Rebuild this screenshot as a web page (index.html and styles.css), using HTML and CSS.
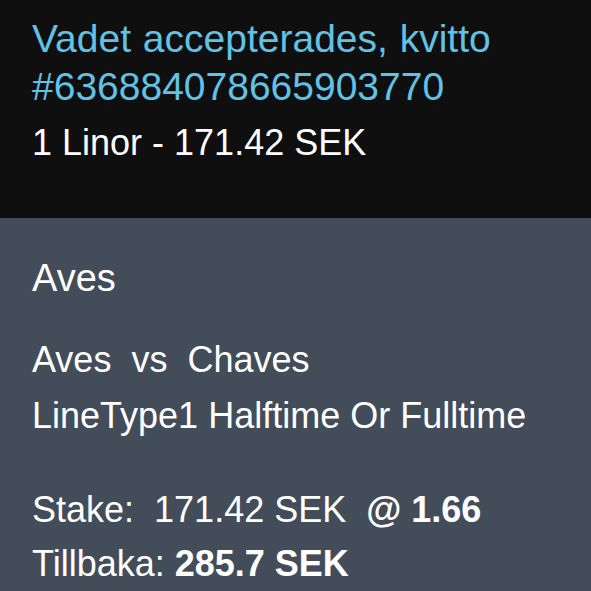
FILE: index.html
```html
<!DOCTYPE html>
<html lang="sv">
<head>
    <meta charset="UTF-8">
    <meta name="viewport" content="width=device-width, initial-scale=1.0">
    <title>Kvitto</title>
    <link rel="stylesheet" href="styles.css">
</head>
<body>
    <header class="receipt-head">
        <h1 class="receipt-title">Vadet accepterades, kvitto #636884078665903770</h1>
        <p class="receipt-sum">1 Linor - 171.42 SEK</p>
    </header>

    <section class="bet">
        <h2 class="bet-event">Aves</h2>

        <div class="bet-info">
            <p>Aves &nbsp;vs &nbsp;Chaves</p>
            <p>LineType1 Halftime Or Fulltime</p>
        </div>

        <div class="bet-amount">
            <p>Stake: &nbsp;171.42 SEK &nbsp;<b>@ 1.66</b></p>
            <p>Tillbaka: <b>285.7 SEK</b></p>
        </div>
    </section>
</body>
</html>
```

FILE: styles.css
```css
body {
    font-family: 'Liberation Sans', Arial, sans-serif;
    margin: 0;
    padding: 0;
    background: #434d5a;
    color: #ffffff;
}

p, h1, h2 {
    margin: 0;
}

.receipt-head {
    background: #0f0f0f;
    padding: 15px 32px 51px 32px;
    height: 152px;
}

.receipt-title {
    font-size: 39px;
    font-weight: normal;
    line-height: 48px;
    color: #62c2e6;
    word-spacing: 1px;
}

.receipt-sum {
    font-size: 36px;
    line-height: 48px;
    margin-top: 8px;
}

.bet {
    padding: 36px 32px 0 32px;
}

.bet-event {
    font-size: 38px;
    font-weight: normal;
    line-height: 48px;
}

.bet-info {
    margin-top: 30px;
    font-size: 36px;
    line-height: 56px;
}

.bet-amount {
    margin-top: 39px;
    font-size: 36px;
    line-height: 54px;
}

.bet-amount b {
    font-weight: bold;
}
```
